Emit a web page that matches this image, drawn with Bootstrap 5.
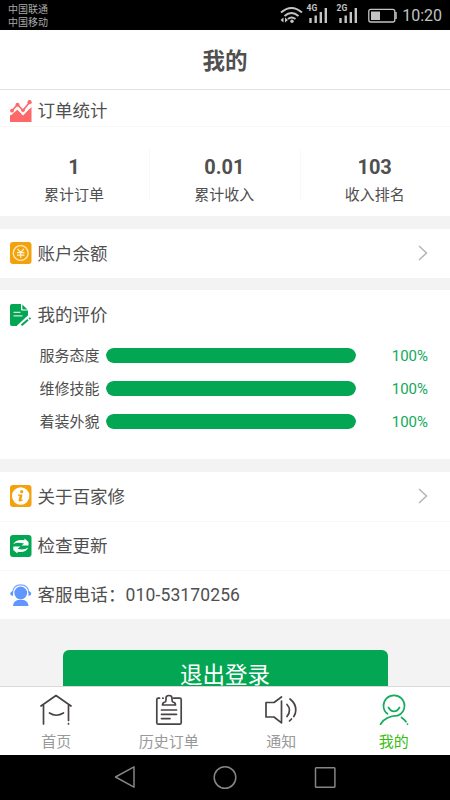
<!DOCTYPE html>
<html lang="zh-CN">
<head>
<meta charset="utf-8">
<meta name="viewport" content="width=device-width, initial-scale=1">
<title>我的</title>
<link href="https://cdn.jsdelivr.net/npm/bootstrap@5.3.0/dist/css/bootstrap.min.css" rel="stylesheet">
<style>
body{font-family:Roboto,"Noto Sans CJK SC",sans-serif;background:#f3f3f3;color:#505050;line-height:1}
svg{display:block;flex:none}
.screen{width:450px;height:800px}
.statusbar{height:30px;background:#000;color:#a9a9a9;padding:0 8px 0 8px}
.carriers{font-size:10px;line-height:13.6px;padding-top:2.500px}
.clock{font-size:16px;color:#c2c2c2;margin-left:2px;padding-top:1px}
.titlebar{height:60px;border-bottom:1px solid #e2e2e2;font-size:22.5px;padding-top:3px}
.block-gap{margin-bottom:12.5px}
.line-item{height:49px;padding:0 22px 0 10px;font-size:17.5px;gap:5.500px}
.line-item > span{padding-top:3px}
.line-item + .line-item{border-top:1px solid #f7f7f7}
.phone{letter-spacing:.12px}
.heading-row{height:37px;padding-top:5px;border-bottom:1px solid #f8f8f8}
.stats{height:89px;padding-top:22px}
.stat{height:51px;gap:10px;padding-top:8px}
.stat > *{position:relative;left:-.700px}
.stat + .stat{border-left:1px solid #f8f8f8}
.stat-value{font-size:20px;line-height:20px}
.stat-label{font-size:15px;line-height:17px}
.ratings{height:169px}
.rating-row{height:33px;font-size:15px;padding-left:39.5px;padding-right:22px}
.rating-row > span{padding-top:2.500px}
.rating-row .progress{width:250px;height:15px;border-radius:8px;margin-left:6.500px;--bs-progress-bar-bg:#03a653}
.rating-row .progress-bar{border-radius:8px}
.green{color:#12a95a}
.logout-area{padding-top:31px}
.logout{width:325px;height:50px;border-radius:6px;background:#03a653;color:#fff;font-size:22.5px;line-height:51px;padding:0;border:0}
.tabs{height:69px;border-top:1px solid #d9d9d9;font-size:15px;color:#999}
.tab-cell{padding-top:6.500px;gap:9px}
.current{color:#38be12}
.softkeys{height:45px;background:#000;gap:75px}
</style>
</head>
<body>
<div class="screen d-flex flex-column overflow-hidden mx-auto">
  <header class="flex-shrink-0">
    <div class="statusbar d-flex justify-content-between">
      <div class="carriers">中国联通<br>中国移动</div>
      <div class="d-flex align-items-center">
        <svg width="120" height="30" viewBox="280 0 120 30" fill="none" stroke="#c4c4c4">
          <path d="M281 12.500Q291.500 3.500 302 12.500M284.500 16Q291.500 10 298.500 16M288 19Q291.500 16 295.500 19" stroke-width="1.900"/>
          <circle cx="292" cy="21.300" r="1.700" fill="#c4c4c4" stroke="none"/>
          <path d="M283.500 17.500v5L280.500 20zM285 17.500v5l3-2.500z" fill="#c4c4c4" stroke="none"/>
          <path d="M310.500 18v5M315.700 15.500V23M320.800 12v11M325.800 8v15M340.500 18v5M345.700 15.500V23M350.800 12v11M355.800 8v15" stroke-width="2.400"/>
          <rect x="368.800" y="9.300" width="26" height="12.700" rx="2" stroke-width="1.300"/>
          <path d="M371 11.500h9v8.500h-9z" fill="#c4c4c4" stroke="none"/>
          <path d="M396 12v7" stroke-width="1.500"/>
          <g fill="#c4c4c4" stroke="none" font-family="Roboto, sans-serif" font-size="8.500" font-weight="700"><text x="306.500" y="11">4G</text><text x="336.500" y="11">2G</text></g>
        </svg>
        <span class="clock">10:20</span>
      </div>
    </div>
    <h1 class="titlebar d-flex align-items-center justify-content-center bg-white fw-bold m-0">我的</h1>
  </header>

  <main class="flex-grow-1 overflow-hidden">
    <section class="bg-white block-gap">
      <div class="line-item heading-row d-flex align-items-center">
        <svg width="22" height="22" viewBox="0 0 22 22"><path d="M0 15.500 7 9l6 6 8.500-8V22H0z" fill="#fe6868"/><path d="M0 14 7.500 7.500l5.500 5.800L21.500 4" fill="none" stroke="#fff" stroke-width="3"/><path d="M2 10.800 7.500 4.500l5.500 6L19.800 2" fill="none" stroke="#fe6868" stroke-width="1.700"/><g fill="#fe6868"><circle cx="2" cy="10.700" r="1.900"/><circle cx="7.500" cy="4.700" r="2"/><circle cx="13" cy="10.300" r="1.800"/><circle cx="19.600" cy="2.200" r="2.100"/></g></svg>
        <span>订单统计</span>
      </div>
      <div class="stats row g-0 text-center">
        <div class="col stat d-flex flex-column"><strong class="stat-value">1</strong><span class="stat-label">累计订单</span></div>
        <div class="col stat d-flex flex-column"><strong class="stat-value">0.01</strong><span class="stat-label">累计收入</span></div>
        <div class="col stat d-flex flex-column"><strong class="stat-value">103</strong><span class="stat-label">收入排名</span></div>
      </div>
    </section>

    <section class="bg-white block-gap">
      <div class="line-item d-flex align-items-center">
        <svg width="22" height="22" viewBox="0 0 22 22"><rect width="21.500" height="22" rx="3" fill="#f4a20c"/><circle cx="10.700" cy="11" r="7.400" fill="none" stroke="#ffe9b8" stroke-width="1.300"/><path d="m7.500 6.800 3.200 3.700 3.200-3.700M10.700 10.500v5.200M7 10.700h7.400M7 13.200h7.400" fill="none" stroke="#fff3d4" stroke-width="1.200"/></svg>
        <span>账户余额</span>
        <svg class="ms-auto" width="10" height="16" viewBox="0 0 10 16" fill="none" stroke="#b5b5b5" stroke-width="1.500"><path d="m1 1 7.500 7L1 15"/></svg>
      </div>
    </section>

    <section class="ratings bg-white block-gap">
      <div class="line-item d-flex align-items-center">
        <svg width="22" height="22" viewBox="0 0 22 22"><path d="M2 0h9v5.500q0 1 1 1h6V12L8 22H2q-2 0-2-2V2q0-2 2-2z" fill="#03a653"/><path d="M12.300.500 17.500 5.500h-4.200q-1 0-1-1z" fill="#03a653"/><path d="M3.500 8.300h7M3.500 11.800h9" stroke="#c6eed8" stroke-width="1.200"/><path d="M7.500 22.500 18.800 12" stroke="#fff" stroke-width="2"/><path d="M11.500 21.300 18 15.700" stroke="#03a653" stroke-width="2"/><circle cx="19.800" cy="14.500" r="1.100" fill="#03a653"/></svg>
        <span>我的评价</span>
      </div>
      <div class="rating-row d-flex align-items-center"><span>服务态度</span><div class="progress"><div class="progress-bar w-100"></div></div><span class="green ms-auto">100%</span></div>
      <div class="rating-row d-flex align-items-center"><span>维修技能</span><div class="progress"><div class="progress-bar w-100"></div></div><span class="green ms-auto">100%</span></div>
      <div class="rating-row d-flex align-items-center"><span>着装外貌</span><div class="progress"><div class="progress-bar w-100"></div></div><span class="green ms-auto">100%</span></div>
    </section>

    <section class="bg-white">
      <div class="line-item d-flex align-items-center">
        <svg width="22" height="22" viewBox="0 0 22 22"><rect width="21.500" height="22" rx="3" fill="#f4a20c"/><circle cx="10.700" cy="11" r="8.700" fill="#fff"/><circle cx="11.700" cy="6.700" r="1.600" fill="#f4a20c"/><path d="M8 9.500h4.500L11.300 15l1.700-.7-.3 1.200q-3.200 1.800-4.200.3L9.600 10.800H8z" fill="#f4a20c"/></svg>
        <span>关于百家修</span>
        <svg class="ms-auto" width="10" height="16" viewBox="0 0 10 16" fill="none" stroke="#b5b5b5" stroke-width="1.500"><path d="m1 1 7.500 7L1 15"/></svg>
      </div>
      <div class="line-item d-flex align-items-center">
        <svg width="22" height="22" viewBox="0 0 22 22"><rect width="21.500" height="22" rx="3" fill="#03a653"/><path d="M3.300 9.300Q5.500 4 14.500 5.200V3.500l4 3.500v3.500h-7l2.500-2Q7 6.800 3.300 9.300zM18.200 12.500Q16 18 7.500 16.800v1.700L3.300 15v-3.500h7l-2.600 2.200q6 2 10.500-1.200z" fill="#fff"/></svg>
        <span>检查更新</span>
      </div>
      <div class="line-item d-flex align-items-center">
        <svg width="22" height="22" viewBox="0 0 22 22"><path d="M2.500 9Q3 .8 10.700.8T19 9" fill="none" stroke="#80a9ff" stroke-width="1.200"/><circle cx="10.700" cy="9" r="6.400" fill="#6097ff"/><path d="M3 7v5Q.200 11.500.200 9.500T3 7zM18.500 7v5q2.800-.5 2.800-2.500T18.500 7zM3 22q.3-4.500 4.500-6h6.500q4.200 1.500 4.500 6z" fill="#6097ff"/></svg>
        <span class="phone">客服电话：010-53170256</span>
      </div>
    </section>
    <div class="logout-area text-center"><button class="btn logout" type="button">退出登录</button></div>
  </main>

  <footer class="flex-shrink-0">
    <nav class="tabs row g-0 bg-white">
      <div class="col tab-cell d-flex flex-column align-items-center">
        <svg width="34" height="32" viewBox="0 0 34 32" fill="none" stroke="#494344" stroke-width="1.700" stroke-linecap="round" stroke-linejoin="round"><path d="M2 12 17 1.500 32 12M4.500 11v19M29.500 11v15.500M29.500 29.700v.3M10.500 19q6.500 4.500 14 0"/></svg>
        <span>首页</span>
      </div>
      <div class="col tab-cell d-flex flex-column align-items-center">
        <svg width="34" height="32" viewBox="0 0 34 32" fill="none" stroke="#494344" stroke-width="1.700" stroke-linecap="round" stroke-linejoin="round"><path d="M7.500 4.200H6.300q-1.500 0-1.500 1.500v23q0 1.500 1.500 1.500h21.400q1.500 0 1.500-1.500v-23q0-1.500-1.500-1.500h-6M10.800 4.200h.3M10.500 11q0-2.500 2.500-3 1-.3 1-2.500V4q0-2.500 3-2.500t3 2.500v1.500q0 2.200 1 2.500 2.500.5 2.500 3zM9.500 16h15M9.500 20.300h15M9.500 24.600h8.500"/></svg>
        <span>历史订单</span>
      </div>
      <div class="col tab-cell d-flex flex-column align-items-center">
        <svg width="34" height="32" viewBox="0 0 34 32" fill="none" stroke="#494344" stroke-width="1.700" stroke-linecap="round" stroke-linejoin="round"><path d="M17.500 7v21.800L10 23H2V8.500h8L17.500 3M23 10.500q5 5.500 0 12M26 5q5.800 4.500 5.800 11 0 3.500-2 6.500M27.500 25l-2 2"/></svg>
        <span>通知</span>
      </div>
      <div class="col tab-cell d-flex flex-column align-items-center">
        <svg width="34" height="32" viewBox="0 0 34 32" fill="none" stroke="#14ac5e" stroke-width="1.700" stroke-linecap="round" stroke-linejoin="round"><path d="M10.500 19.800Q6.500 17 6.500 11.800A10.500 10.500 0 0 1 27.500 11.800Q27.500 19 20.500 21.700 8.500 22 3.500 30.200M11.500 13.500q2 3.800 5.500 3.800t5.500-3.800M24.500 23.500q3 2 4.500 4.300M30.500 30v.2"/></svg>
        <span class="current">我的</span>
      </div>
    </nav>
    <div class="softkeys d-flex align-items-center justify-content-center">
      <svg width="25" height="25" viewBox="0 0 25 25" fill="none" stroke="#858585" stroke-width="1.500" stroke-linejoin="round"><path d="M21 1.800v20.400L2.500 12z"/></svg>
      <svg width="25" height="25" viewBox="0 0 25 25" fill="none" stroke="#858585" stroke-width="1.500"><circle cx="12" cy="12.500" r="10.800"/></svg>
      <svg width="25" height="25" viewBox="0 0 25 25" fill="none" stroke="#858585" stroke-width="1.500"><rect x="2.500" y="2.800" width="19.400" height="19.400" rx=".8"/></svg>
    </div>
  </footer>
</div>
<script src="https://cdn.jsdelivr.net/npm/bootstrap@5.3.0/dist/js/bootstrap.bundle.min.js"></script>
</body>
</html>
